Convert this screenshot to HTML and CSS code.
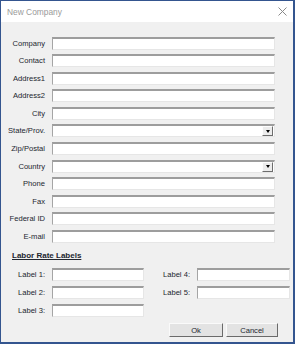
FILE: index.html
```html
<!DOCTYPE html>
<html>
<head>
  <meta charset="UTF-8">
  <title>New Company</title>
  <link rel="stylesheet" href="styles.css">
</head>
<body>

<div class="window">
  <div class="titlebar">
    <span class="title">New Company</span>
    <svg class="close" width="9" height="9" viewBox="0 0 9 9">
      <path d="M0.5 0.5 L8.5 8.5 M8.5 0.5 L0.5 8.5" stroke="#8a8a8a" stroke-width="1" fill="none"/>
    </svg>
  </div>

  <div class="content">
    <div class="fields">
      <label>Company</label><input type="text">
      <label>Contact</label><input type="text">
      <label>Address1</label><input type="text">
      <label>Address2</label><input type="text">
      <label>City</label><input type="text">
      <label>State/Prov.</label><div class="combo"><span class="drop"></span></div>
      <label>Zip/Postal</label><input type="text">
      <label>Country</label><div class="combo"><span class="drop"></span></div>
      <label>Phone</label><input type="text">
      <label>Fax</label><input type="text">
      <label>Federal ID</label><input type="text">
      <label>E-mail</label><input type="text">
    </div>

    <div class="section">Labor Rate Labels</div>

    <div class="rates">
      <div class="rate-col left">
        <label>Label 1:</label><input type="text">
        <label>Label 2:</label><input type="text">
        <label>Label 3:</label><input type="text">
      </div>
      <div class="rate-col right">
        <label>Label 4:</label><input type="text">
        <label>Label 5:</label><input type="text">
      </div>
    </div>

    <div class="buttons">
      <button class="ok">Ok</button>
      <button class="cancel">Cancel</button>
    </div>
  </div>
</div>

</body>
</html>
```

FILE: styles.css
```css
body {
  margin: 0;
  font-family: "Liberation Sans", Arial, sans-serif;
}
.window {
  width: 295px;
  height: 344px;
  box-sizing: border-box;
  border-style: solid;
  border-color: #34558f;
  border-width: 1px 2px 2px 1px;
  background: #f0f0f0;
  display: flex;
  flex-direction: column;
}
.titlebar {
  height: 21px;
  background: #fff;
  display: flex;
  align-items: center;
  justify-content: space-between;
  padding: 0 6px 0 6px;
}
.title {
  font-size: 8.4px;
  color: #9a9a9a;
}
.content {
  display: flex;
  flex-direction: column;
}
label {
  font-size: 7.6px;
  color: #22262f;
  text-align: right;
  white-space: nowrap;
}
input, .combo {
  box-sizing: border-box;
  height: 13px;
  width: 100%;
  margin: 0;
  padding: 0;
  background: #fff;
  border-style: solid;
  border-width: 2px 1px 1px 1px;
  border-color: #9d9d9d #e6e6e6 #e6e6e6 #a5a5a5;
  outline: none;
}
.fields {
  margin-top: 14.5px;
  display: grid;
  grid-template-columns: 44px 223px;
  grid-auto-rows: 13px;
  column-gap: 7px;
  row-gap: 4.6px;
  align-items: center;
}
.combo {
  display: flex;
  justify-content: flex-end;
  align-items: stretch;
  padding: 0 1px 0 0;
}
.drop {
  width: 11px;
  box-sizing: border-box;
  background: #ececec;
  border-style: solid;
  border-width: 1px;
  border-color: #fdfdfd #6d6d6d #6d6d6d #fdfdfd;
  display: flex;
  align-items: center;
  justify-content: center;
}
.drop::after {
  content: "";
  border-left: 2.5px solid transparent;
  border-right: 2.5px solid transparent;
  border-top: 3px solid #000;
}
.section {
  margin-top: 7px;
  padding-left: 11px;
  font-size: 8px;
  font-weight: bold;
  line-height: 12px;
  text-decoration: underline;
  color: #22262f;
}
.rates {
  margin-top: 6px;
  display: flex;
  align-items: flex-start;
}
.rate-col {
  display: grid;
  grid-auto-rows: 13px;
  row-gap: 5px;
  align-items: center;
  column-gap: 7px;
}
.rate-col.left {
  grid-template-columns: 44px 92px;
}
.rate-col.right {
  margin-left: 1px;
  grid-template-columns: 45px 93px;
}
.buttons {
  margin-top: 6px;
  display: flex;
  justify-content: flex-end;
  gap: 3px;
  padding-right: 15px;
}
button {
  height: 14px;
  box-sizing: border-box;
  padding: 0;
  font-family: "Liberation Sans", Arial, sans-serif;
  font-size: 7.6px;
  color: #22262f;
  background: #e3e3e3;
  border-style: solid;
  border-width: 1px;
  border-color: #fafafa #6a6a6a #6a6a6a #fafafa;
}
.ok {
  width: 54px;
}
.cancel {
  width: 52px;
}
```
